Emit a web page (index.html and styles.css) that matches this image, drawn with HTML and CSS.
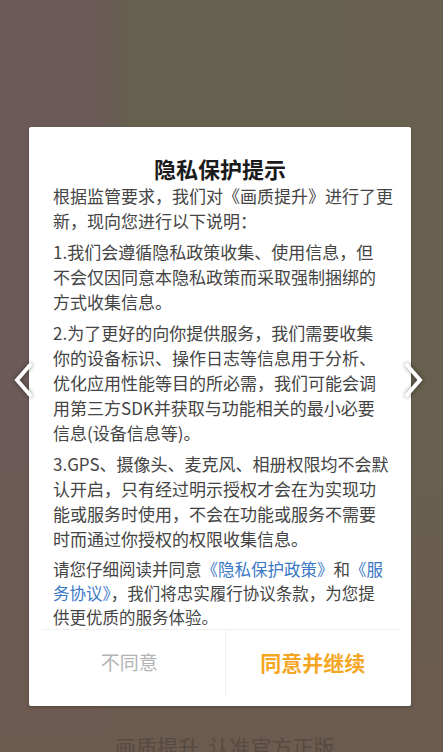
FILE: index.html
```html
<!DOCTYPE html>
<html lang="zh-CN">
<head>
    <meta charset="UTF-8">
    <meta name="viewport" content="width=device-width, initial-scale=1.0">
    <title>隐私保护提示</title>
    <link rel="stylesheet" href="styles.css">
</head>
<body>
    <div class="screen">
        <div class="dialog">
            <h2 class="dialog-title">隐私保护提示</h2>
            <div class="dialog-body">
                <p>根据监管要求，我们对《画质提升》进行了更<br>新，现向您进行以下说明：</p>
                <p>1.我们会遵循隐私政策收集、使用信息，但<br>不会仅因同意本隐私政策而采取强制捆绑的<br>方式收集信息。</p>
                <p>2.为了更好的向你提供服务，我们需要收集<br>你的设备标识、操作日志等信息用于分析、<br>优化应用性能等目的所必需，我们可能会调<br>用第三方SDK并获取与功能相关的最小必要<br>信息(设备信息等)。</p>
                <p>3.GPS、摄像头、麦克风、相册权限均不会默<br>认开启，只有经过明示授权才会在为实现功<br>能或服务时使用，不会在功能或服务不需要<br>时而通过你授权的权限收集信息。</p>
                <p class="notice">请您仔细阅读并同意<a href="#">《隐私保护政策》</a>和<a href="#">《服<br>务协议》</a>，我们将忠实履行协议条款，为您提<br>供更优质的服务体验。</p>
            </div>
            <div class="dialog-actions">
                <button class="btn btn-cancel">不同意</button>
                <button class="btn btn-ok">同意并继续</button>
            </div>
        </div>
        <div class="footer-text">画质提升&nbsp;&nbsp;认准官方正版</div>

        <!-- carousel arrows sit over the page -->
        <svg class="arrow arrow-left" width="24" height="40" viewBox="0 0 24 40">
            <polyline points="18,5 5,20 18,35" />
        </svg>
        <svg class="arrow arrow-right" width="24" height="40" viewBox="0 0 24 40">
            <polyline points="6,5 19,20 6,35" />
        </svg>
    </div>
</body>
</html>
```

FILE: styles.css
```css
html, body {
    margin: 0;
    padding: 0;
}

body {
    font-family: "Noto Sans CJK SC", "Noto Sans", sans-serif;
    overflow: hidden;
}

.screen {
    position: relative;
    height: 752px;
    box-sizing: border-box;
    padding-top: 127px;
    background:
        linear-gradient(180deg, rgba(110, 92, 80, 0) 0, rgba(110, 92, 80, 0) 55%, rgba(108, 90, 78, 0.9) 100%),
        linear-gradient(90deg, #6b5a58 0, #6b5a58 95px, #66604f 130px, #67604f 100%);
    overflow: hidden;
}

.dialog {
    margin: 0 32px 0 29px;
    background-color: #fff;
    border-radius: 2px;
    box-shadow: 0 1px 3px rgba(0, 0, 0, 0.25);
    padding-top: 28px;
    padding-bottom: 9px;
}

.dialog-title {
    margin: 0;
    text-align: center;
    font-size: 22px;
    line-height: 26px;
    font-weight: bold;
    color: #1b1b1b;
}

.dialog-body {
    padding: 2px 14px 0 24px;
    font-size: 17px;
    line-height: 25px;
    color: #444;
    white-space: nowrap;
}

.dialog-body p {
    margin: 6px 0 0 0;
}

.dialog-body p:first-child {
    margin-top: 0;
}

.dialog-body p.notice {
    margin-top: 6px;
    font-size: 16.5px;
    line-height: 24px;
}

.dialog-body a {
    color: #3b78c6;
    text-decoration: none;
}

.dialog-actions {
    display: flex;
    margin: 0 11px 0 13px;
    border-top: 1px solid #f0f0f0;
    height: 67px;
}

.btn {
    flex: 1;
    background: none;
    border: none;
    font-family: inherit;
    padding: 0 0 4px 0;
    cursor: pointer;
}

.btn-cancel {
    font-size: 19px;
    color: #b4b4b4;
    border-right: 1px solid #f2f2f2;
    padding-right: 8px;
}

.btn-ok {
    font-size: 21px;
    font-weight: bold;
    color: #f5a623;
}

.footer-text {
    margin-top: 26px;
    padding-left: 115px;
    font-size: 21px;
    line-height: 28px;
    color: #574a40;
}

.arrow {
    position: absolute;
    top: 360px;
    filter: drop-shadow(0 0 2px rgba(0, 0, 0, 0.45));
}

.arrow polyline {
    fill: none;
    stroke: #fff;
    stroke-width: 4;
    stroke-linecap: round;
    stroke-linejoin: miter;
}

.arrow-left {
    left: 12px;
}

.arrow-right {
    left: 401px;
}
```
